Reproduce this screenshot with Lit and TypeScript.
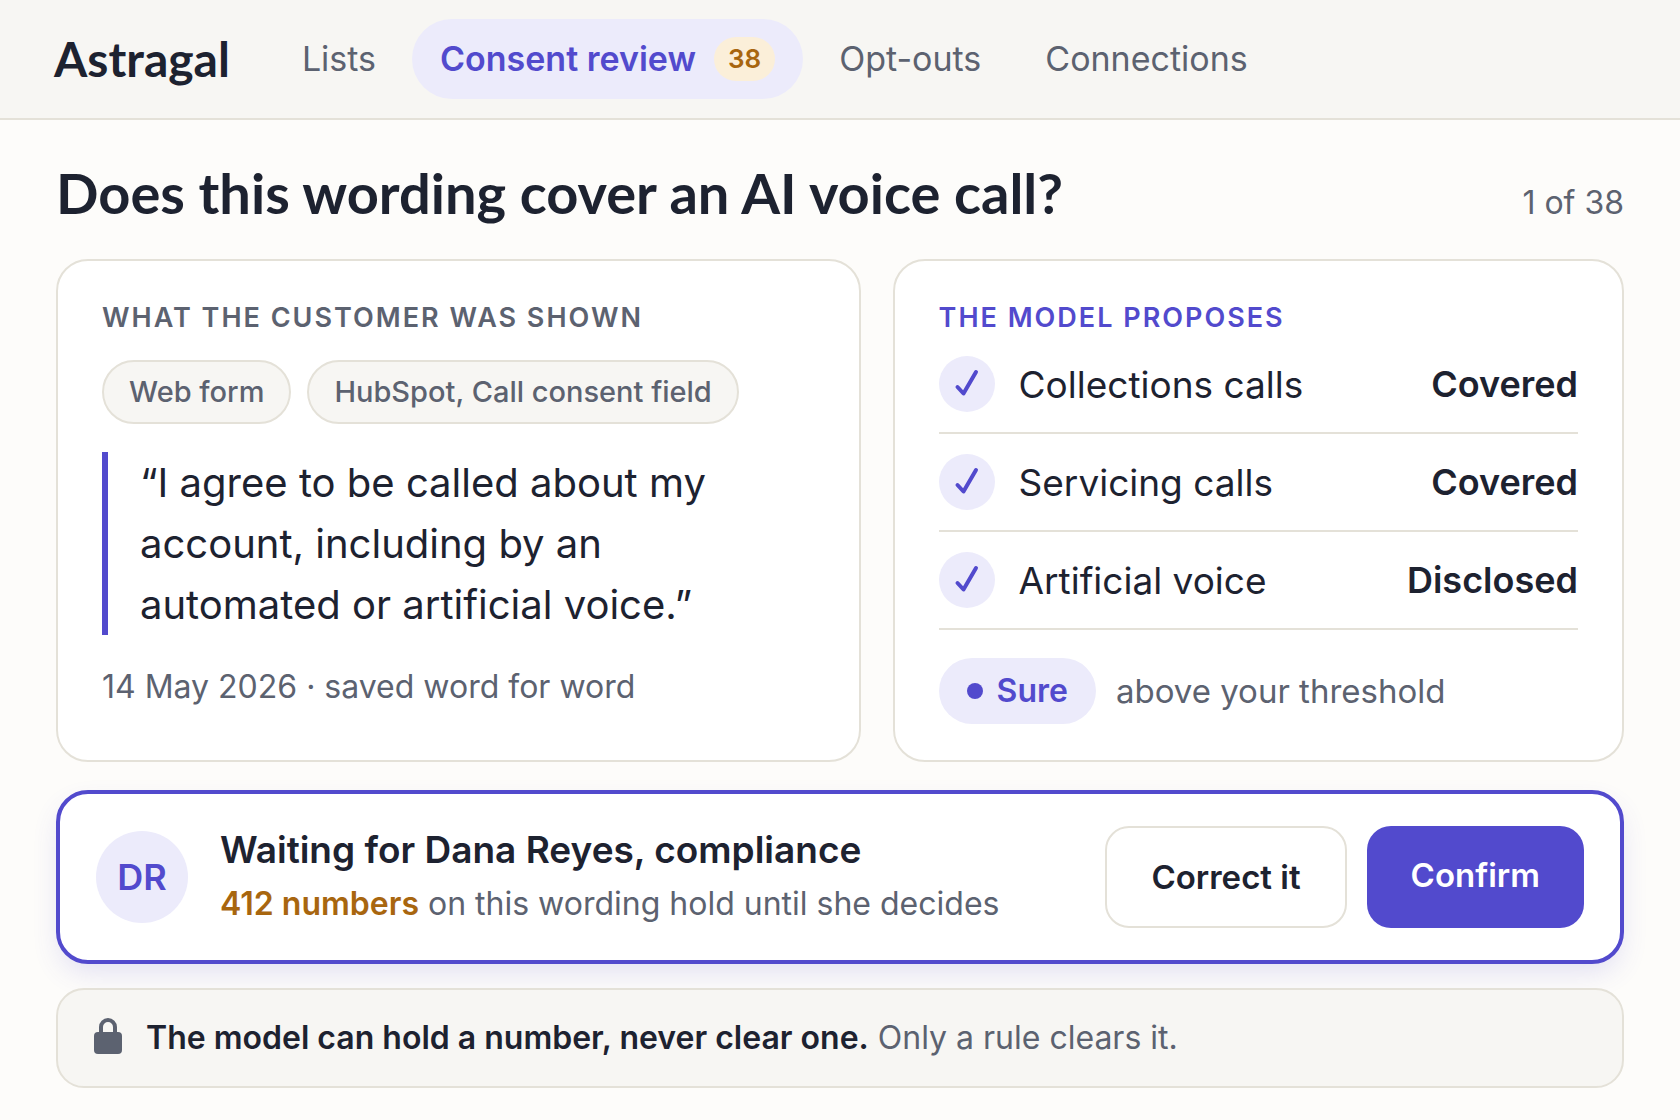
import { LitElement, html, css, svg } from "lit";
import { customElement, property, state } from "lit/decorators.js";
import { classMap } from "lit/directives/class-map.js";

interface NavItem {
  label: string;
  href: string;
  count?: number;
}

interface Finding {
  subject: string;
  verdict: string;
}

const NAV: NavItem[] = [
  { label: "Lists", href: "#lists" },
  { label: "Consent review", href: "#consent-review", count: 38 },
  { label: "Opt-outs", href: "#opt-outs" },
  { label: "Connections", href: "#connections" },
];

const SOURCES = ["Web form", "HubSpot, Call consent field"];

const FINDINGS: Finding[] = [
  { subject: "Collections calls", verdict: "Covered" },
  { subject: "Servicing calls", verdict: "Covered" },
  { subject: "Artificial voice", verdict: "Disclosed" },
];

const tick = svg`<path d="M18.5 31 L24.5 37.5 L37 16" fill="none" stroke="currentColor"
  stroke-width="4" stroke-linecap="round" stroke-linejoin="round" />`;

@customElement("top-bar")
class TopBar extends LitElement {
  @state() private current = "Consent review";

  static styles = css`
    :host {
      display: block;
    }
    .bar {
      display: flex;
      align-items: center;
      gap: 44px;
      padding: 19px 54px;
      background: #f7f6f3;
      border-bottom: 2px solid #e4e1d8;
    }
    .brand {
      font-family: Lato, "Liberation Sans", sans-serif;
      font-size: 48px;
      font-weight: 700;
      line-height: 56px;
      color: #1d2230;
      text-decoration: none;
    }
    .nav {
      display: flex;
      align-items: center;
      gap: 8px;
    }
    .link {
      display: flex;
      align-items: center;
      gap: 18px;
      padding: 0 28px;
      border-radius: 40px;
      font-size: 34px;
      line-height: 80px;
      color: #5c6270;
      text-decoration: none;
      white-space: nowrap;
    }
    .current {
      background: #ecebfb;
      color: #524acd;
      font-weight: 600;
    }
    .count {
      padding: 0 14px;
      border-radius: 22px;
      background: #fbefd9;
      color: #a8660f;
      font-size: 26px;
      line-height: 44px;
    }
  `;

  render() {
    return html`
      <header class="bar">
        <a class="brand" href="#home">Astragal</a>
        <nav class="nav">
          ${NAV.map(
            (item) => html`<a
              class=${classMap({ link: true, current: item.label === this.current })}
              href=${item.href}
              @click=${() => (this.current = item.label)}
              >${item.label}${item.count ? html`<span class="count">${item.count}</span>` : ""}</a
            >`
          )}
        </nav>
      </header>
    `;
  }
}

@customElement("info-card")
class InfoCard extends LitElement {
  @property() heading = "";
  @property({ type: Boolean, reflect: true }) accent = false;

  static styles = css`
    :host {
      display: block;
      box-sizing: border-box;
      padding: 41px 44px 36px;
      background: #ffffff;
      border: 2px solid #e4e1d8;
      border-radius: 32px;
    }
    .heading {
      margin: 0;
      font-size: 27px;
      font-weight: 600;
      line-height: 32px;
      letter-spacing: 2px;
      text-transform: uppercase;
      color: #5c6270;
    }
    :host([accent]) .heading {
      color: #524acd;
    }
  `;

  render() {
    return html`<h2 class="heading">${this.heading}</h2>
      <slot></slot>`;
  }
}

@customElement("app-root")
class AppRoot extends LitElement {
  static styles = css`
    :host {
      display: block;
      min-height: 100vh;
      background: #fdfcfa;
      color: #1d2230;
      font-family: Inter, "Liberation Sans", sans-serif;
    }
    .page {
      padding: 38px 56px 28px;
    }
    .title-row {
      display: flex;
      align-items: baseline;
      justify-content: space-between;
      gap: 32px;
    }
    .title {
      margin: 0;
      font-family: Lato, "Liberation Sans", sans-serif;
      font-size: 56px;
      font-weight: 700;
      line-height: 70px;
    }
    .muted {
      font-size: 32px;
      line-height: 40px;
      color: #5c6270;
    }
    .cards {
      display: grid;
      grid-template-columns: 11fr 10fr;
      gap: 32px;
      margin-top: 31px;
    }
    .chips {
      display: flex;
      flex-wrap: wrap;
      gap: 16px;
      margin-top: 26px;
    }
    .chip {
      padding: 0 25px;
      border: 2px solid #e4e1d8;
      border-radius: 32px;
      background: #f7f6f3;
      color: #5c6270;
      font-size: 29px;
      font-weight: 500;
      line-height: 60px;
    }
    .quote {
      margin: 28px 0;
      padding: 0 100px 0 32px;
      border-left: 6px solid #524acd;
      font-size: 40px;
      line-height: 61px;
    }
    .saved {
      margin: 0;
      line-height: 48px;
    }
    .findings {
      width: 100%;
      margin-top: 2px;
      border-collapse: collapse;
    }
    .findings th,
    .findings td {
      height: 96px;
      padding: 0;
      border-bottom: 2px solid #e4e1d8;
      font-size: 37px;
      text-align: left;
    }
    .findings th {
      font-weight: 400;
    }
    .findings .verdict {
      font-size: 36px;
      font-weight: 600;
      text-align: right;
    }
    .subject {
      display: flex;
      align-items: center;
      gap: 24px;
    }
    .tick {
      width: 56px;
      height: 56px;
      border-radius: 50%;
      background: #ecebfb;
      color: #524acd;
    }
    .confidence {
      display: flex;
      align-items: center;
      gap: 20px;
      margin-top: 28px;
      font-size: 33px;
      color: #5c6270;
    }
    .sure {
      display: flex;
      align-items: center;
      gap: 14px;
      padding: 0 28px;
      border-radius: 33px;
      background: #ecebfb;
      color: #524acd;
      font-size: 32px;
      font-weight: 600;
      line-height: 66px;
    }
    .dot {
      width: 16px;
      height: 16px;
      border-radius: 50%;
      background: currentColor;
    }
    .decision {
      display: flex;
      align-items: center;
      gap: 32px;
      margin-top: 28px;
      padding: 32px 36px;
      background: #ffffff;
      border: 4px solid #524acd;
      border-radius: 32px;
      box-shadow: 0 12px 28px -4px rgba(82, 74, 205, 0.16);
    }
    .avatar {
      width: 92px;
      height: 92px;
      border-radius: 50%;
      background: #ecebfb;
      color: #524acd;
      font-size: 36px;
      font-weight: 600;
      line-height: 92px;
      text-align: center;
    }
    .who {
      display: flex;
      flex: 1;
      flex-direction: column;
      gap: 6px;
    }
    .waiting {
      margin: 0;
      font-size: 37px;
      font-weight: 600;
      line-height: 48px;
    }
    .held {
      margin: 0;
      line-height: 48px;
    }
    .held strong {
      color: #a8660f;
      font-weight: 600;
    }
    .actions {
      display: flex;
      gap: 20px;
    }
    .button {
      height: 102px;
      padding: 0 44px;
      border: 2px solid #e4e1d8;
      border-radius: 24px;
      background: #ffffff;
      color: #1d2230;
      font-family: inherit;
      font-size: 33px;
      font-weight: 600;
      cursor: pointer;
    }
    .primary {
      padding-bottom: 4px;
      border: none;
      background: #524acd;
      color: #ffffff;
    }
    .rule {
      display: flex;
      align-items: center;
      gap: 24px;
      margin: 24px 0 0;
      padding: 24px 36px;
      border: 2px solid #e4e1d8;
      border-radius: 28px;
      background: #f7f6f3;
      line-height: 48px;
    }
    .rule strong {
      color: #1d2230;
      font-weight: 600;
    }
    .lock {
      width: 28px;
      height: 36px;
      margin-bottom: 4px;
      color: #5c6270;
    }
  `;

  render() {
    return html`
      <top-bar></top-bar>
      <main class="page">
        <div class="title-row">
          <h1 class="title">Does this wording cover an AI voice call?</h1>
          <span class="muted">1 of 38</span>
        </div>

        <div class="cards">
          <info-card heading="What the customer was shown">
            <div class="chips">${SOURCES.map((s) => html`<span class="chip">${s}</span>`)}</div>
            <blockquote class="quote">
              “I agree to be called about my account, including by an automated or artificial voice.”
            </blockquote>
            <p class="muted saved">14 May 2026 · saved word for word</p>
          </info-card>

          <info-card heading="The model proposes" accent>
            <table class="findings">
              <tbody>
                ${FINDINGS.map(
                  (f) => html`<tr>
                    <th scope="row">
                      <span class="subject">
                        <svg class="tick" viewBox="0 0 56 56" aria-hidden="true">${tick}</svg>
                        ${f.subject}
                      </span>
                    </th>
                    <td class="verdict">${f.verdict}</td>
                  </tr>`
                )}
              </tbody>
            </table>
            <div class="confidence">
              <span class="sure"><span class="dot"></span>Sure</span>
              above your threshold
            </div>
          </info-card>
        </div>

        <section class="decision">
          <div class="avatar">DR</div>
          <div class="who">
            <h2 class="waiting">Waiting for Dana Reyes, compliance</h2>
            <p class="muted held">
              <strong>412 numbers</strong> on this wording hold until she decides
            </p>
          </div>
          <div class="actions">
            <button class="button" type="button">Correct it</button>
            <button class="button primary" type="button">Confirm</button>
          </div>
        </section>

        <p class="muted rule">
          <svg class="lock" viewBox="0 0 28 36" aria-hidden="true">
            <path
              d="M7 16 V9 a7 7 0 0 1 14 0 V16"
              fill="none"
              stroke="currentColor"
              stroke-width="4"
            />
            <rect x="0" y="14" width="28" height="22" rx="4" fill="currentColor" />
          </svg>
          <span>
            <strong>The model can hold a number, never clear one.</strong> Only a rule clears it.
          </span>
        </p>
      </main>
    `;
  }
}
